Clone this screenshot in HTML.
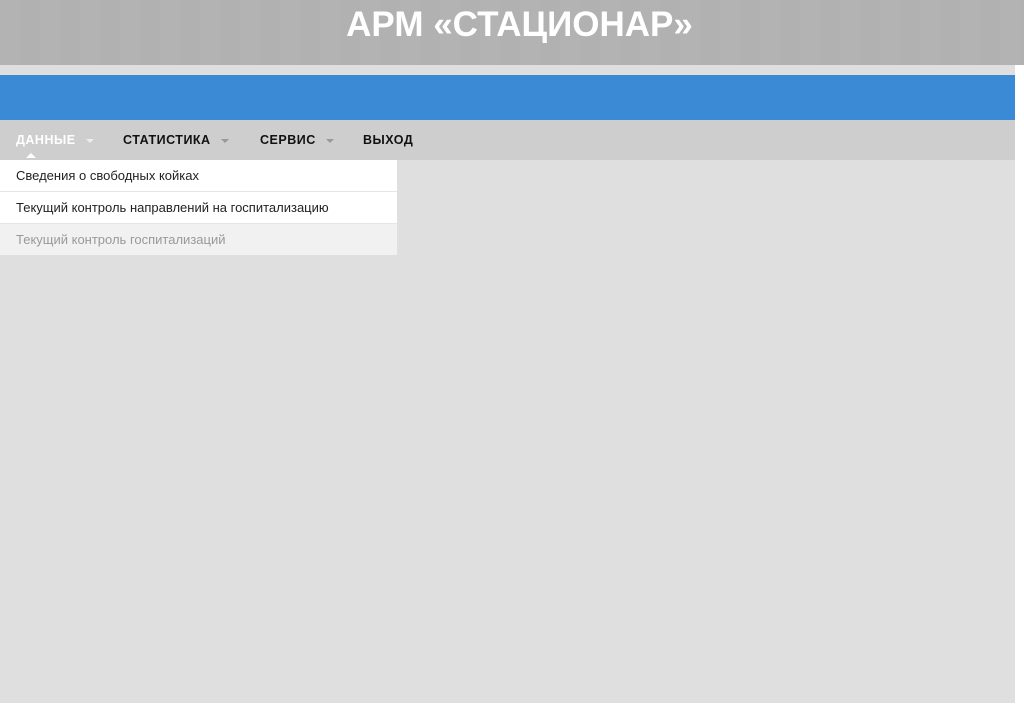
<!DOCTYPE html>
<html><head><meta charset="utf-8"><style>
body{margin:0;width:1024px;height:715px;background:#fff;font-family:"Liberation Sans",Arial,sans-serif;overflow:hidden;position:relative}
#hdr{position:absolute;left:0;top:0;width:1024px;height:65px;background:#b1b1b1;background-image:linear-gradient(90deg,rgba(255,255,255,.03) 50%,transparent 50%);background-size:40px 65px}
#hdr h1{margin:0;text-align:center;color:#fff;font-size:35px;font-weight:bold;line-height:50px;padding-left:15px}
#app{position:absolute;left:0;top:65px;width:1015px;height:638px;background:#dfdfdf}
#blue{position:absolute;left:0;top:10px;width:1015px;height:45px;background:#3a8ad6}
#nav{position:absolute;left:0;top:55px;width:1015px;height:40px;background:#cecece}
.n{position:absolute;top:13px;font-size:12.5px;font-weight:bold;color:#111;letter-spacing:.5px}
.c{display:inline-block;width:0;height:0;border-left:4px solid transparent;border-right:4px solid transparent;border-top:4px solid #999;margin-left:10px;vertical-align:middle}
#dd{position:absolute;left:0;top:95px;width:397px;background:#fff}
.i{height:31px;line-height:31px;padding-left:16px;font-size:13px;color:#222;border-bottom:1px solid #e6e6e6}
</style></head><body>
<div id="hdr"><h1>АРМ «СТАЦИОНАР»</h1></div>
<div id="app">
<div id="blue"></div>
<div id="nav">
<span class="n" style="left:16px;color:#fff">ДАННЫЕ<span class="c" style="border-top-color:#eee"></span></span>
<span style="position:absolute;left:26px;top:33px;border-left:5px solid transparent;border-right:5px solid transparent;border-bottom:5px solid #fff"></span>
<span class="n" style="left:123px">СТАТИСТИКА<span class="c"></span></span>
<span class="n" style="left:260px">СЕРВИС<span class="c"></span></span>
<span class="n" style="left:363px">ВЫХОД</span>
</div>
<div id="dd">
<div class="i">Сведения о свободных койках</div>
<div class="i">Текущий контроль направлений на госпитализацию</div>
<div class="i" style="background:#f1f1f1;color:#999;border:0">Текущий контроль госпитализаций</div>
</div>
</div>
</body></html>
